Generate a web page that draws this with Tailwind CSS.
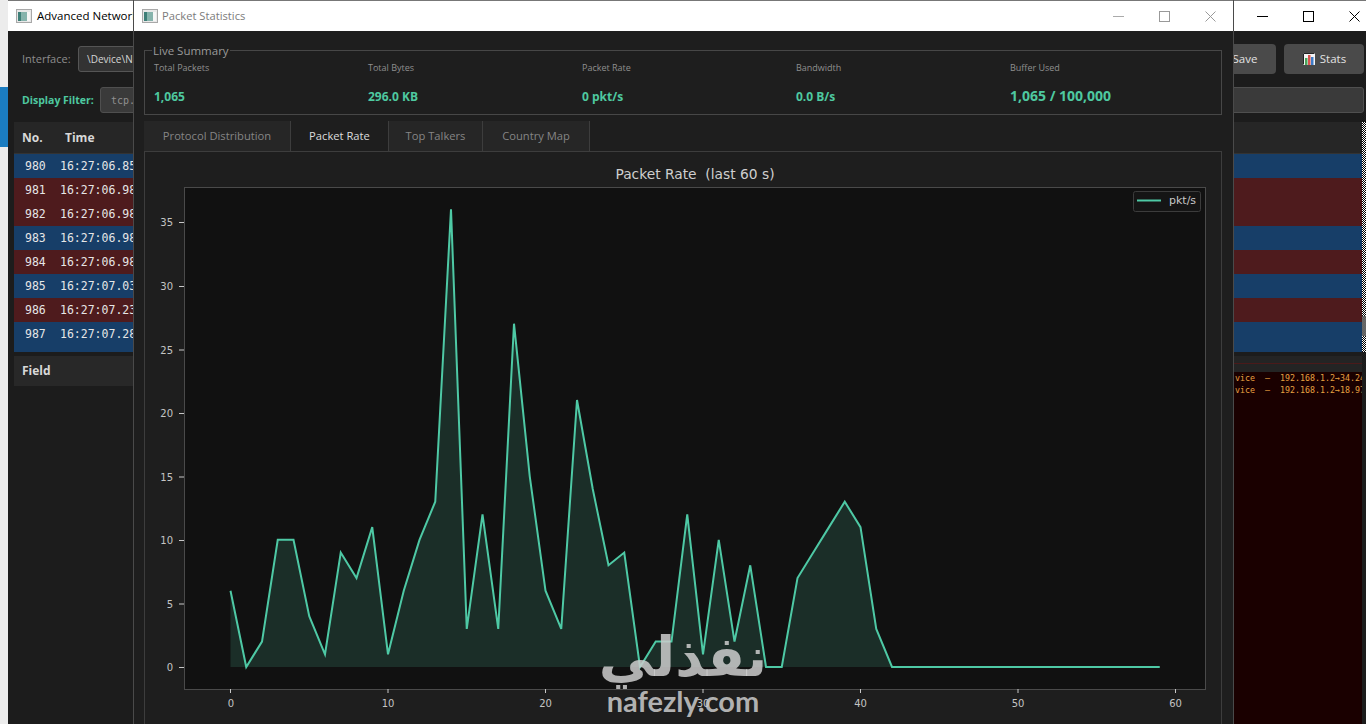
<!DOCTYPE html>
<html lang="en">
<head>
  <meta charset="UTF-8">
  <meta name="viewport" content="width=device-width, initial-scale=1.0">
  <title>Packet Statistics</title>
  <script src="https://cdn.jsdelivr.net/npm/@tailwindcss/browser@4"></script>
</head>
<body class="relative w-[1366px] h-[724px] overflow-hidden bg-[#ececec] font-['Open_Sans',sans-serif]">

  <!-- Desktop behind the windows -->
  <div class="absolute left-0 top-[87px] w-[8px] h-[60px] bg-[#1b7cc0]"></div>

  <!-- Main window -->
  <div class="absolute left-[8px] top-0 w-[1358px] h-[724px] flex flex-col bg-[#1c1c1c]">
    <div class="h-[31px] shrink-0 bg-white border-t border-[#777] flex items-center pl-[8px]">
      <svg width="16" height="14" viewBox="0 0 16 14" class="shrink-0"><rect x=".5" y=".5" width="15" height="13" fill="#e8e8e8" stroke="#a8a8a8"/><rect x="2" y="3" width="3" height="9" fill="#3e7f78"/><rect x="5" y="3" width="6" height="9" fill="#86b3ac"/><rect x="11" y="3" width="3" height="9" fill="#f6f6f6"/></svg>
      <span class="ml-[5px] text-[11.5px] text-black">Advanced Network Analyzer</span>
      <div class="ml-auto flex items-center gap-[35px] pr-[6px]">
        <svg width="11" height="11" viewBox="0 0 11 11"><path d="M0 5.5h11" stroke="#000" stroke-width="1"/></svg>
        <svg width="11" height="11" viewBox="0 0 11 11"><rect x=".5" y=".5" width="10" height="10" fill="none" stroke="#000"/></svg>
        <svg width="11" height="11" viewBox="0 0 11 11"><path d="M.5.5l10 10M10.5.5l-10 10" stroke="#000" fill="none"/></svg>
      </div>
    </div>

    <div class="flex-1 flex flex-col pl-[6px] pr-[2px] min-h-0">
      <div class="h-[56px] shrink-0 flex items-center pl-[8px]">
        <span class="text-[11px] text-[#8d8d8d] w-[56px]">Interface:</span>
        <div class="w-[300px] h-[26px] flex items-center px-[8px] rounded-[3px] border border-[#555] bg-[#333] text-[10px] text-[#d5d5d5]">\Device\NPF_Loopback</div>
        <div class="ml-auto w-[86px] h-[30px] flex items-center justify-center rounded-[4px] bg-[#4a4a4a] text-[11.5px] text-[#e2e2e2] pl-[24px]">Save</div>
        <div class="ml-[8px] w-[80px] h-[30px] flex items-center justify-center gap-[5px] rounded-[4px] bg-[#4a4a4a] text-[11.5px] text-[#e2e2e2]">
          <svg width="12" height="12" viewBox="0 0 12 12" class="ml-[1px]"><rect width="12" height="12" fill="#f4f4f4"/><path d="M.5 11.5v-11h11" fill="none" stroke="#222"/><rect x="2" y="5" width="2.5" height="7" fill="#4aa35a"/><rect x="5" y="2" width="2.5" height="10" fill="#d9534f"/><rect x="8" y="4" width="2.5" height="8" fill="#3d7cc9"/></svg>
          Stats
        </div>
      </div>
      <div class="h-[26px] shrink-0 flex items-center pl-[8px]">
        <span class="pt-[1px] text-[10.5px] font-bold text-[#4ec9a0] w-[78px]">Display Filter:</span>
        <div class="flex-1 h-[26px] flex items-center px-[10px] rounded-[3px] border border-[#4f4f4f] bg-[#3a3a3a] font-['DejaVu_Sans_Mono',monospace] text-[10px] text-[#8f8f8f]">tcp.port == 443</div>
      </div>

      <!-- Packet table -->
      <div class="relative mt-[9px] mr-[-2px] h-[230px] shrink-0 pr-[4px] overflow-hidden">
        <div class="h-[31px] bg-[#262626] flex items-center pl-[8px] text-[12px] font-bold text-[#d8d8d8]">
          <span class="w-[43px]">No.</span><span>Time</span>
        </div>
        <div class="h-[1px] bg-[#333]"></div>
        <div class="font-['DejaVu_Sans_Mono',monospace] text-[11.5px] text-[#e6e6e6] [&>div]:pt-[2px]">
          <div class="h-[24px] flex items-center bg-[#173e68]"><span class="w-[46px] pl-[11px]">980</span><span>16:27:06.859</span></div>
          <div class="h-[24px] flex items-center bg-[#4e1b1d]"><span class="w-[46px] pl-[11px]">981</span><span>16:27:06.982</span></div>
          <div class="h-[24px] flex items-center bg-[#4e1b1d]"><span class="w-[46px] pl-[11px]">982</span><span>16:27:06.983</span></div>
          <div class="h-[24px] flex items-center bg-[#173e68]"><span class="w-[46px] pl-[11px]">983</span><span>16:27:06.984</span></div>
          <div class="h-[24px] flex items-center bg-[#4e1b1d]"><span class="w-[46px] pl-[11px]">984</span><span>16:27:06.985</span></div>
          <div class="h-[24px] flex items-center bg-[#173e68]"><span class="w-[46px] pl-[11px]">985</span><span>16:27:07.031</span></div>
          <div class="h-[24px] flex items-center bg-[#4e1b1d]"><span class="w-[46px] pl-[11px]">986</span><span>16:27:07.231</span></div>
          <div class="h-[30px] pb-[6px] flex items-center bg-[#173e68]"><span class="w-[46px] pl-[11px]">987</span><span>16:27:07.281</span></div>
        </div>
        <div class="absolute right-0 top-0 bottom-0 w-[4px] bg-[repeating-conic-gradient(#000_0_25%,#fff_0_50%)] bg-[length:2px_2px]">
          <div class="absolute left-0 top-[194px] w-[4px] h-[20px] bg-[#666]"></div>
        </div>
      </div>

      <!-- Bottom split -->
      <div class="flex-1 flex min-h-0 mt-[4px]">
        <div class="flex-1">
          <div class="h-[30px] bg-[#282828] flex items-center pl-[8px] text-[12px] font-bold text-[#d8d8d8]">Field</div>
        </div>
        <div class="w-[500px] flex flex-col pr-[2px]">
          <div class="h-[7px] bg-[#242424]"></div>
          <div class="h-[1px] bg-[#4a1a1a]"></div>
          <div class="h-[8px] bg-[#242424]"></div>
          <div class="flex-1 bg-[#1a0000] overflow-hidden pt-[0px] font-['DejaVu_Sans_Mono',monospace] text-[8.3px] leading-[12px] text-[#e8a040] pl-[371px]">
            <div class="whitespace-pre">vice  —  192.168.1.2→34.24</div>
            <div class="whitespace-pre">vice  —  192.168.1.2→18.97</div>
          </div>
        </div>
      </div>
    </div>
  </div>

  <!-- Packet Statistics window -->
  <div class="absolute left-[133px] top-0 w-[1101px] h-[724px] flex flex-col bg-[#1e1e1e] border-x border-[#4a4a4a]">
    <div class="h-[31px] shrink-0 bg-white border-t border-[#777] flex items-center pl-[8px]">
      <svg width="16" height="14" viewBox="0 0 16 14" class="shrink-0"><rect x=".5" y=".5" width="15" height="13" fill="#e8e8e8" stroke="#a8a8a8"/><rect x="2" y="3" width="3" height="9" fill="#3e7f78"/><rect x="5" y="3" width="6" height="9" fill="#86b3ac"/><rect x="11" y="3" width="3" height="9" fill="#f6f6f6"/></svg>
      <span class="ml-[4px] text-[11.2px] text-[#7b7b7b]">Packet Statistics</span>
      <div class="ml-auto flex items-center gap-[35px] pr-[17px]">
        <svg width="11" height="11" viewBox="0 0 11 11"><path d="M0 5.5h11" stroke="#aaa"/></svg>
        <svg width="11" height="11" viewBox="0 0 11 11"><rect x=".5" y=".5" width="10" height="10" fill="none" stroke="#999"/></svg>
        <svg width="11" height="11" viewBox="0 0 11 11"><path d="M.5.5l10 10M10.5.5l-10 10" stroke="#999" fill="none"/></svg>
      </div>
    </div>

    <div class="flex-1 flex flex-col pl-[10px] pr-[11px] min-h-0">
      <fieldset class="mt-[12px] h-[72px] min-w-0 shrink-0 border border-[#474747] pl-[9px]">
        <legend class="relative top-[1px] ml-[-2px] px-[1px] text-[11.5px] leading-[14px] text-[#9a9a9a]">Live Summary</legend>
        <div class="grid grid-cols-[214px_214px_214px_214px_1fr] pt-[5px]">
          <div><div class="text-[9px] leading-[12px] text-[#8f8f8f]">Total Packets</div><div class="mt-[14px] text-[12px] leading-[17px] font-bold text-[#4ec9a0]">1,065</div></div>
          <div><div class="text-[9px] leading-[12px] text-[#8f8f8f]">Total Bytes</div><div class="mt-[14px] text-[12px] leading-[17px] font-bold text-[#4ec9a0]">296.0 KB</div></div>
          <div><div class="text-[9px] leading-[12px] text-[#8f8f8f]">Packet Rate</div><div class="mt-[14px] text-[12px] leading-[17px] font-bold text-[#4ec9a0]">0 pkt/s</div></div>
          <div><div class="text-[9px] leading-[12px] text-[#8f8f8f]">Bandwidth</div><div class="mt-[14px] text-[12px] leading-[17px] font-bold text-[#4ec9a0]">0.0 B/s</div></div>
          <div><div class="text-[9px] leading-[12px] text-[#8f8f8f]">Buffer Used</div><div class="mt-[13px] text-[14px] leading-[17px] font-bold text-[#4ec9a0]">1,065 / 100,000</div></div>
        </div>
      </fieldset>

      <div class="mt-[6px] h-[30px] shrink-0 flex text-[11.2px] text-[#858585] [&>div]:pt-[1px]">
        <div class="w-[147px] flex items-center justify-center bg-[#262626] border-r border-[#3d3d3d]">Protocol Distribution</div>
        <div class="w-[98px] flex items-center justify-center bg-[#1e1e1e] border-r border-[#3d3d3d] text-[#dcdcdc]">Packet Rate</div>
        <div class="w-[94px] flex items-center justify-center bg-[#262626] border-r border-[#3d3d3d]">Top Talkers</div>
        <div class="w-[107px] flex items-center justify-center bg-[#262626] border-r border-[#3d3d3d]">Country Map</div>
      </div>

      <div class="flex-1 min-h-0 border border-[#3d3d3d] border-b-0 overflow-hidden">
        <svg class="block" width="1076" height="573" viewBox="145 152 1076 573" font-family="'DejaVu Sans',sans-serif">
          <text x="695" y="178.5" text-anchor="middle" font-size="13.8" fill="#cfcfcf" xml:space="preserve">Packet Rate  (last 60 s)</text>
          <rect x="184.5" y="187.5" width="1021" height="502" fill="#111111" stroke="#4a4a4a"/>
          <polygon id="rate-fill" fill="#4ec9a0" fill-opacity="0.16"/>
          <polyline id="rate-line" fill="none" stroke="#4ec9a5" stroke-width="2" stroke-linejoin="miter"/>

          <path stroke="#c8c8c8" fill="none" d="M230.5 689v4M388 689v4M545.5 689v4M703 689v4M860.5 689v4M1018 689v4M1175.5 689v4M179 667.5h5M179 604h5M179 540.5h5M179 477h5M179 413.5h5M179 350h5M179 286.5h5M179 222.5h5"/>
          <g font-size="10" fill="#c4c4c4" text-anchor="middle">
            <text x="231" y="707">0</text><text x="388" y="707">10</text><text x="545.5" y="707">20</text><text x="703" y="707">30</text><text x="860.5" y="707">40</text><text x="1018" y="707">50</text><text x="1175.5" y="707">60</text>
          </g>
          <g font-size="10" fill="#c4c4c4" text-anchor="end">
            <text x="173" y="671">0</text><text x="173" y="608">5</text><text x="173" y="544">10</text><text x="173" y="481">15</text><text x="173" y="417">20</text><text x="173" y="354">25</text><text x="173" y="290">30</text><text x="173" y="226">35</text>
          </g>

          <rect x="1133.5" y="191.5" width="67" height="20" rx="2" fill="#151515" stroke="#3c3c3c"/>
          <path d="M1137 200.5h24" stroke="#4ec9a5" stroke-width="2"/>
          <text x="1169" y="204" font-size="11" fill="#c8c8c8">pkt/s</text>
        </svg>
      </div>
    </div>
  </div>

  <!-- Watermark -->
  <div class="absolute left-[590px] top-[622px] w-[186px] flex flex-col items-center text-[#cdcdcd]/85 pointer-events-none">
    <div dir="rtl" lang="ar" class="font-['DejaVu_Sans',sans-serif] font-bold text-[55px] leading-[70px]">نفذلي</div>
    <div class="mt-[-9px] font-['Lato',sans-serif] font-bold text-[29px] leading-[36px]">nafezly.com</div>
  </div>

  <script>
    // packets per second for the last 60 seconds
    const rates = [6,0,2,10,10,4,1,9,7,11,1,6,10,13,36,3,12,3,27,15,6,3,21,14,8,9,0,2,2,12,1,10,2,8,0,0,7,9,11,13,11,3,0,0,0,0,0,0,0,0,0,0,0,0,0,0,0,0,0,0];
    const pts = rates.map((v, i) => `${230.5 + i * 15.75},${667 - v * 12.714}`);
    document.getElementById('rate-line').setAttribute('points', pts.join(' '));
    document.getElementById('rate-fill').setAttribute('points', '230.5,667 ' + pts.join(' ') + ' 1159.75,667');
  </script>
</body>
</html>
